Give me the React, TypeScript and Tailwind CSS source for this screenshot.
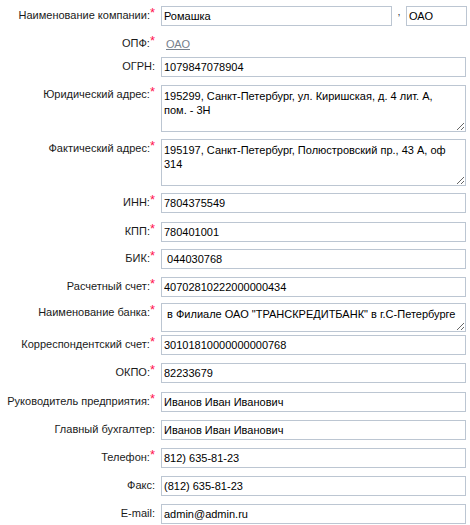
import React from "react";

type Row = {
  label: string;
  required?: boolean;
  value: string;
  kind?: "input" | "textarea";
  h?: string;
  mt: string;
};

const rows: Row[] = [
  { label: "ОГРН:", value: "1079847078904", mt: "mt-[3px]" },
  {
    label: "Юридический адрес:",
    required: true,
    value: "195299, Санкт-Петербург, ул. Киришская, д. 4 лит. А,\nпом. - 3Н",
    kind: "textarea",
    h: "h-[47px]",
    mt: "mt-[8px]",
  },
  {
    label: "Фактический адрес:",
    required: true,
    value: "195197, Санкт-Петербург, Полюстровский пр., 43 А, оф\n314",
    kind: "textarea",
    h: "h-[47px]",
    mt: "mt-[7px]",
  },
  { label: "ИНН:", required: true, value: "7804375549", mt: "mt-[7px]" },
  { label: "КПП:", required: true, value: "780401001", mt: "mt-[9px]" },
  { label: "БИК:", required: true, value: " 044030768", mt: "mt-[7px]" },
  { label: "Расчетный счет:", required: true, value: "40702810222000000434", mt: "mt-[8px]" },
  {
    label: "Наименование банка:",
    required: true,
    value: " в Филиале ОАО \"ТРАНСКРЕДИТБАНК\" в г.С-Петербурге",
    kind: "textarea",
    h: "h-[29px]",
    mt: "mt-[6px]",
  },
  { label: "Корреспондентский счет:", required: true, value: "30101810000000000768", mt: "mt-[3px]" },
  { label: "ОКПО:", required: true, value: "82233679", mt: "mt-[8px]" },
  { label: "Руководитель предприятия:", required: true, value: "Иванов Иван Иванович", mt: "mt-[9px]" },
  { label: "Главный бухгалтер:", value: "Иванов Иван Иванович", mt: "mt-[8px]" },
  { label: "Телефон:", required: true, value: "812) 635-81-23", mt: "mt-[8px]" },
  { label: "Факс:", value: "(812) 635-81-23", mt: "mt-[8px]" },
  { label: "E-mail:", value: "admin@admin.ru", mt: "mt-[8px]" },
];

const inputCls =
  "h-[20px] border border-[#bcc6d2] bg-white px-[2px] text-[11px] text-black outline-none font-['Liberation_Sans',Arial,sans-serif]";

function Label({ text, required }: { text: string; required?: boolean }) {
  return (
    <div className="w-[155px] shrink-0 text-right text-[11px] leading-[14px] pt-[2px] text-[#1a1a1a]">
      {text}
      {required && (
        <span className="text-[#ff1450] text-[13px] leading-[10px] align-top">*</span>
      )}
    </div>
  );
}

export default function App() {
  return (
    <div className="w-[470px] h-[525px] overflow-hidden bg-white pt-[6px] font-['Liberation_Sans',Arial,sans-serif]">
      <div className="flex items-start">
        <Label text="Наименование компании:" required />
        <input readOnly value="Ромашка" className={`${inputCls} ml-[6px] w-[231px]`} />
        <span className="w-[14px] pt-[5px] text-center text-[11px] leading-[14px] text-[#333]">’</span>
        <input readOnly value="ОАО" className={`${inputCls} w-[61px]`} />
      </div>

      <div className="flex items-start mt-[8px] h-[20px]">
        <Label text="ОПФ:" required />
        <a href="#" className="ml-[11px] pt-[3px] text-[11px] leading-[14px] text-[#76808c] underline">
          ОАО
        </a>
      </div>

      {rows.map((r) => (
        <div key={r.label} className={`flex items-start ${r.mt}`}>
          <Label text={r.label} required={r.required} />
          {r.kind === "textarea" ? (
            <textarea
              readOnly
              value={r.value}
              className={`${r.h} ml-[6px] w-[305px] resize-y border border-[#bcc6d2] bg-white px-[2px] pt-[3px] text-[11px] leading-[14px] text-black outline-none font-['Liberation_Sans',Arial,sans-serif]`}
            />
          ) : (
            <input readOnly value={r.value} className={`${inputCls} ml-[6px] w-[305px]`} />
          )}
        </div>
      ))}
    </div>
  );
}
